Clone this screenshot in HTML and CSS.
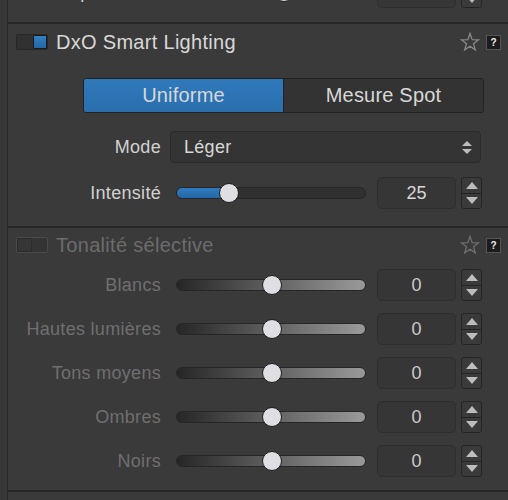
FILE: index.html
```html
<!DOCTYPE html>
<html lang="fr">
<head>
    <meta charset="UTF-8">
    <title>Palettes</title>
    <link rel="stylesheet" href="styles.css">
</head>
<body>
    <div class="app">
        <div class="rail"></div>
        <div class="panel">
            <!-- fin de la palette précédente -->
            <section class="palette prev">
                <div class="row row-cut">
                    <span class="label">Compensation</span>
                    <div class="slider grey">
                        <span class="thumb" style="left: 97px"></span>
                    </div>
                    <div class="num"></div>
                    <div class="stepper"><span class="up"></span><span class="down"></span></div>
                </div>
            </section>

            <section class="palette">
                <div class="palette-head">
                    <div class="toggle on"><span class="knob"></span></div>
                    <h3 class="title">DxO Smart Lighting</h3>
                    <svg class="star" width="20" height="20" viewBox="0 0 20 20">
                        <polygon points="10,1.5 12.2,7.6 18.6,7.8 13.5,11.7 15.3,17.9 10,14.3 4.7,17.9 6.5,11.7 1.4,7.8 7.8,7.6" />
                    </svg>
                    <span class="help">?</span>
                </div>

                <div class="seg">
                    <button class="seg-btn active">Uniforme</button>
                    <button class="seg-btn">Mesure Spot</button>
                </div>

                <div class="row row-mode">
                    <span class="label">Mode</span>
                    <div class="select">
                        <span>Léger</span>
                        <span class="arrows"><span class="up"></span><span class="down"></span></span>
                    </div>
                </div>

                <div class="row row-int">
                    <span class="label">Intensité</span>
                    <div class="slider">
                        <span class="fill" style="width: 52px"></span>
                        <span class="thumb" style="left: 42px"></span>
                    </div>
                    <div class="num">25</div>
                    <div class="stepper"><span class="up"></span><span class="down"></span></div>
                </div>
            </section>

            <section class="palette off">
                <div class="palette-head">
                    <div class="toggle"><span class="knob"></span></div>
                    <h3 class="title">Tonalité sélective</h3>
                    <svg class="star" width="20" height="20" viewBox="0 0 20 20">
                        <polygon points="10,1.5 12.2,7.6 18.6,7.8 13.5,11.7 15.3,17.9 10,14.3 4.7,17.9 6.5,11.7 1.4,7.8 7.8,7.6" />
                    </svg>
                    <span class="help">?</span>
                </div>

                <div class="rows">
                    <div class="row">
                        <span class="label">Blancs</span>
                        <div class="slider grey"><span class="thumb" style="left: 85px"></span></div>
                        <div class="num">0</div>
                        <div class="stepper"><span class="up"></span><span class="down"></span></div>
                    </div>
                    <div class="row">
                        <span class="label">Hautes lumières</span>
                        <div class="slider grey"><span class="thumb" style="left: 85px"></span></div>
                        <div class="num">0</div>
                        <div class="stepper"><span class="up"></span><span class="down"></span></div>
                    </div>
                    <div class="row">
                        <span class="label">Tons moyens</span>
                        <div class="slider grey"><span class="thumb" style="left: 85px"></span></div>
                        <div class="num">0</div>
                        <div class="stepper"><span class="up"></span><span class="down"></span></div>
                    </div>
                    <div class="row">
                        <span class="label">Ombres</span>
                        <div class="slider grey"><span class="thumb" style="left: 85px"></span></div>
                        <div class="num">0</div>
                        <div class="stepper"><span class="up"></span><span class="down"></span></div>
                    </div>
                    <div class="row">
                        <span class="label">Noirs</span>
                        <div class="slider grey"><span class="thumb" style="left: 85px"></span></div>
                        <div class="num">0</div>
                        <div class="stepper"><span class="up"></span><span class="down"></span></div>
                    </div>
                </div>
            </section>
        </div>
    </div>
</body>
</html>
```

FILE: styles.css
```css
body {
    margin: 0;
    background-color: #3a3a3a;
    font-family: "Liberation Sans", Arial, sans-serif;
    color: #d6d6d6;
    overflow: hidden;
}
.app {
    display: flex;
    height: 500px;
}
.rail {
    width: 7px;
    background-color: #373737;
    border-right: 1px solid #282828;
}
.panel {
    flex: 1;
}
.palette {
    border-bottom: 2px solid #272727;
    padding-bottom: 17px;
}
.palette.prev {
    padding-bottom: 14px;
}
.palette.off {
    padding-bottom: 13px;
}

/* en-tête de palette */
.palette-head {
    display: flex;
    align-items: center;
    height: 36px;
    padding: 0 7px 0 8px;
}
.off .palette-head {
    height: 34px;
}
.toggle {
    display: flex;
    width: 32px;
    height: 16px;
    box-sizing: border-box;
    border: 1px solid #282828;
    border-radius: 2px;
    background-color: #313131;
}
.toggle.on {
    justify-content: flex-end;
}
.knob {
    width: 15px;
    height: 14px;
    box-sizing: border-box;
    border: 1px solid #2a2a2a;
    border-radius: 1px;
    background-color: #363636;
}
.toggle.on .knob {
    width: 14px;
    border-color: #1b1b1b;
    background: linear-gradient(#3380c4, #2466a6);
}
.off .toggle {
    border-color: #4a4a4a;
    background-color: #343434;
}
.title {
    flex: 1;
    margin: 0 0 0 8px;
    font-size: 20px;
    font-weight: normal;
    letter-spacing: 0.3px;
    color: #d8d8d8;
}
.off .title {
    color: #6c6c6c;
}
.star {
    fill: none;
    stroke: #888;
    stroke-width: 1.3;
    stroke-linejoin: miter;
}
.off .star {
    stroke: #6e6e6e;
}
.help {
    display: flex;
    align-items: center;
    justify-content: center;
    width: 15px;
    height: 15px;
    margin-left: 6px;
    box-sizing: border-box;
    border: 1px solid #555;
    background-color: #1c1c1c;
    color: #eee;
    font-size: 10px;
    font-weight: bold;
}

/* boutons segmentés */
.seg {
    display: flex;
    height: 35px;
    margin: 18px 24px 0 75px;
    border: 1px solid #222;
    border-radius: 3px;
    box-sizing: border-box;
    overflow: hidden;
}
.seg-btn {
    flex: 1;
    border: none;
    background-color: #333;
    color: #d8d8d8;
    font-family: inherit;
    font-size: 20px;
    letter-spacing: 0.2px;
    padding: 0;
}
.seg-btn.active {
    flex: 0 0 200px;
    border-right: 1px solid #222;
    background: linear-gradient(#2f79bb, #2a6fae);
}

/* lignes de réglage */
.row {
    display: flex;
    align-items: center;
    height: 32px;
}
.row-cut {
    margin-top: -24px;
}
.row-mode {
    margin-top: 18px;
}
.row-int {
    margin-top: 14px;
}
.rows {
    display: flex;
    flex-direction: column;
    gap: 12px;
    margin-top: 7px;
}
.label {
    width: 153px;
    flex: none;
    text-align: right;
    font-size: 18px;
    letter-spacing: 0.3px;
    color: #d2d2d2;
}
.off .label {
    color: #6f6f6f;
}
.select {
    display: flex;
    align-items: center;
    justify-content: space-between;
    width: 311px;
    height: 32px;
    margin-left: 9px;
    padding: 0 8px 0 13px;
    box-sizing: border-box;
    border: 1px solid #2a2a2a;
    border-radius: 4px;
    background-color: #343434;
    font-size: 18px;
    letter-spacing: 0.3px;
    color: #d8d8d8;
}
.arrows {
    display: flex;
    flex-direction: column;
    gap: 3px;
}
.arrows .up {
    border-left: 5px solid transparent;
    border-right: 5px solid transparent;
    border-bottom: 5px solid #bcbcbc;
}
.arrows .down {
    border-left: 5px solid transparent;
    border-right: 5px solid transparent;
    border-top: 5px solid #bcbcbc;
}

/* curseur */
.slider {
    position: relative;
    width: 190px;
    height: 12px;
    margin-left: 15px;
    box-sizing: border-box;
    border: 1px solid #262626;
    border-radius: 6px;
    background-color: #303030;
}
.slider.grey {
    background: linear-gradient(to right, #262626, #9a9a9a);
}
.fill {
    display: block;
    height: 100%;
    border-radius: 5px 0 0 5px;
    background: linear-gradient(#2f7bbf, #2667a5);
}
.thumb {
    position: absolute;
    top: -5px;
    width: 20px;
    height: 20px;
    box-sizing: border-box;
    border: 1px solid #1c1c1c;
    border-radius: 50%;
    background-color: #dedee3;
}
.num {
    display: flex;
    align-items: center;
    justify-content: center;
    width: 79px;
    height: 32px;
    margin-left: 11px;
    box-sizing: border-box;
    border: 1px solid #2e2e2e;
    border-radius: 5px;
    background-color: #363636;
    font-size: 18px;
    color: #d8d8d8;
}
.off .num {
    color: #cacaca;
}
.stepper {
    display: flex;
    flex-direction: column;
    width: 21px;
    height: 32px;
    margin-left: 5px;
    box-sizing: border-box;
    border: 1px solid #242424;
    border-radius: 3px;
    background-color: #3a3a3a;
}
.stepper span {
    flex: 1;
    display: flex;
    align-items: center;
    justify-content: center;
}
.stepper .up {
    border-bottom: 1px solid #242424;
}
.stepper .up::before {
    content: "";
    border-left: 6px solid transparent;
    border-right: 6px solid transparent;
    border-bottom: 7px solid #bdbdbd;
}
.stepper .down::before {
    content: "";
    border-left: 6px solid transparent;
    border-right: 6px solid transparent;
    border-top: 7px solid #bdbdbd;
}
```
